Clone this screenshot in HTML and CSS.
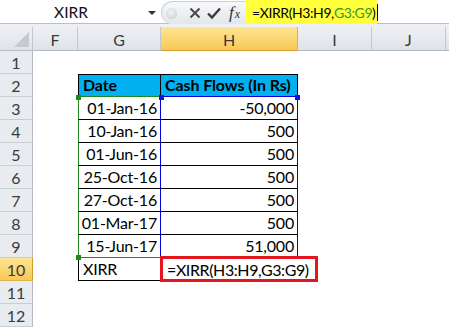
FILE: index.html
```html
<!DOCTYPE html>
<html>
<head>
<meta charset="utf-8">
<link rel="stylesheet" href="styles.css">
</head>
<body>
<div class="app">
  <div class="fbar">
    <div class="namebox"><span class="name">XIRR</span><span class="dd"></span></div>
    <div class="pill">
      <span class="dot"></span>
      <span class="btn">
        <svg width="12" height="12" viewBox="0 0 12 12"><path d="M1.5 1.5 L10.5 10.5 M10.5 1.5 L1.5 10.5" stroke="#4a4a4a" stroke-width="2" fill="none"/></svg>
      </span>
      <span class="btn">
        <svg width="14" height="12" viewBox="0 0 14 12"><path d="M1 6.5 L5 10.5 L13 1.5" stroke="#3a3a3a" stroke-width="2.4" fill="none"/></svg>
      </span>
      <span class="fx"><span class="f">f</span><span class="x">x</span></span>
    </div>
    <div class="formula"><span>=XIRR(H3:H9,</span><span class="grn">G3:G9</span><span>)</span><span class="caret"></span></div>
    <div class="frest"></div>
  </div>
  <div class="strip"></div>
  <div class="sheet">
    <div class="row hdr">
      <div class="corner"><span class="tri"></span></div>
      <div class="ch">F</div>
      <div class="ch">G</div>
      <div class="ch sel">H</div>
      <div class="ch">I</div>
      <div class="ch">J</div>
      <div class="ch last"></div>
    </div>
    <div class="row"><div class="rh">1</div><div class="c"></div><div class="c"></div><div class="c"></div><div class="c"></div><div class="c"></div><div class="c"></div></div>
    <div class="row"><div class="rh">2</div><div class="c"></div><div class="c t th g2">Date</div><div class="c t th h2">Cash Flows (In Rs)</div><div class="c"></div><div class="c"></div><div class="c"></div></div>
    <div class="row"><div class="rh">3</div><div class="c"></div><div class="c t gr r">01-Jan-16</div><div class="c t hb r">-50,000</div><div class="c"></div><div class="c"></div><div class="c"></div></div>
    <div class="row"><div class="rh">4</div><div class="c"></div><div class="c t gr r">10-Jan-16</div><div class="c t hb r">500</div><div class="c"></div><div class="c"></div><div class="c"></div></div>
    <div class="row"><div class="rh">5</div><div class="c"></div><div class="c t gr r">01-Jun-16</div><div class="c t hb r">500</div><div class="c"></div><div class="c"></div><div class="c"></div></div>
    <div class="row"><div class="rh">6</div><div class="c"></div><div class="c t gr r">25-Oct-16</div><div class="c t hb r">500</div><div class="c"></div><div class="c"></div><div class="c"></div></div>
    <div class="row"><div class="rh">7</div><div class="c"></div><div class="c t gr r">27-Oct-16</div><div class="c t hb r">500</div><div class="c"></div><div class="c"></div><div class="c"></div></div>
    <div class="row"><div class="rh">8</div><div class="c"></div><div class="c t gr r">01-Mar-17</div><div class="c t hb r">500</div><div class="c"></div><div class="c"></div><div class="c"></div></div>
    <div class="row"><div class="rh">9</div><div class="c"></div><div class="c t gr glast r">15-Jun-17</div><div class="c t hb hlast r">51,000</div><div class="c"></div><div class="c"></div><div class="c"></div></div>
    <div class="row"><div class="rh sel">10</div><div class="c"></div><div class="c t g10">XIRR</div><div class="c h10"><span class="ftext">=XIRR(H3:H9,G3:G9)</span><span class="redbox"></span></div><div class="c"></div><div class="c"></div><div class="c"></div></div>
    <div class="row"><div class="rh">11</div><div class="c"></div><div class="c"></div><div class="c"></div><div class="c"></div><div class="c"></div><div class="c"></div></div>
    <div class="row"><div class="rh">12</div><div class="c"></div><div class="c"></div><div class="c"></div><div class="c"></div><div class="c"></div><div class="c"></div></div>
    <span class="sq green sq1"></span>
    <span class="sq green sq2"></span>
    <span class="sq blue sq3"></span>
    <span class="sq blue sq4"></span>
  </div>
</div>
</body>
</html>
```

FILE: styles.css
```css
* { box-sizing: border-box; }
html, body { margin: 0; padding: 0; background: #fff; }
body { font-family: Lato, "Liberation Sans", sans-serif; color: #000; width: 449px; height: 328px; overflow: hidden; }

.fbar { display: flex; height: 24px; border-bottom: 1px solid #b9c0c8; background: #fff; }
.namebox { width: 161px; display: flex; align-items: center; }
.name { width: 142px; text-align: center; font-size: 15.5px; color: #111; }
.dd { width: 0; height: 0; margin-left: 6px; border-left: 4px solid transparent; border-right: 4px solid transparent; border-top: 4px solid #333; margin-top: 2px; }

.pill { width: 85px; margin-top: 1px; height: 23px; background: linear-gradient(#f7f8fa, #e3e6ea); border: 1px solid #c9ced5; border-right: 0; border-bottom: 0; border-radius: 12px 0 0 12px; display: flex; align-items: center; }
.dot { width: 11px; height: 11px; border-radius: 50%; background: radial-gradient(circle at 45% 40%, #f4f5f7, #c4c9d0); margin-left: 4px; margin-right: 12px; }
.btn { display: flex; align-items: center; margin-right: 6px; }
.fx { font-family: "Liberation Serif", serif; font-style: italic; color: #333; margin-left: 2px; display: flex; align-items: baseline; }
.fx .f { font-size: 17px; }
.fx .x { font-size: 12px; margin-left: 1px; }

.formula { width: 131px; flex: none; height: 24px; background: #ffff3a; display: flex; align-items: center; padding-left: 6px; font-size: 14px; letter-spacing: -0.4px; white-space: nowrap; }
.grn { color: #2f9a2f; }
.caret { width: 1px; height: 17px; background: #000; margin-left: 2px; flex: none; }
.frest { flex: 1; }

.strip { height: 3px; background: #eef0f3; }

.sheet { position: relative; }
.row { display: grid; grid-template-columns: 33px 45px 83px 137px 74px 74px 1fr; height: 23px; }
.row.hdr { height: 24px; }

.corner { background: linear-gradient(#eef0f3, #dfe3e8); border-right: 1px solid #c3c8cf; border-bottom: 1px solid #b3bac4; position: relative; }
.tri { position: absolute; right: 3px; bottom: 3px; width: 0; height: 0; border-left: 15px solid transparent; border-bottom: 15px solid #c5cad1; }
.ch { background: linear-gradient(#eef0f3, #dfe3e8); border-right: 1px solid #c3c8cf; border-bottom: 1px solid #b3bac4; display: flex; align-items: center; justify-content: center; font-size: 16px; color: #3a3a3a; padding-top: 1px; }
.ch.sel { background: linear-gradient(#fde592, #f7c957); border-right-color: #e2b04a; border-bottom-color: #d59a2e; }
.ch.last { border-right: 0; }

.rh { background: #e8ebef; border-right: 1px solid #b3bac4; border-bottom: 1px solid #c9ced5; display: flex; align-items: center; justify-content: center; font-size: 16px; color: #3a3a3a; }
.rh.sel { background: linear-gradient(#fde592, #f7c957); border-bottom-color: #e2b04a; border-right-color: #d59a2e; }

.c { background: #fff; font-size: 16px; letter-spacing: -0.2px; white-space: nowrap; display: flex; align-items: flex-end; padding: 0 3px 2px 4px; }
.c.r { justify-content: flex-end; }
.t { border-right: 1px solid #000; border-bottom: 1px solid #000; }
.th { background: #00b0f0; font-weight: bold; border-top: 1px solid #000; letter-spacing: -0.1px; }
.g2 { border-left: 1px solid #000; border-bottom-color: #1b8a1b; padding-left: 4px; }
.h2 { border-bottom-color: #0000e0; }
.gr { border-left: 1px solid #1b8a1b; border-right-color: #0000e0; }
.hb { border-right-color: #0000e0; }
.glast { border-bottom-color: #1b8a1b; }
.hlast { border-bottom-color: #0000e0; }
.g10 { border-left: 1px solid #000; }
.h10 { position: relative; overflow: visible; padding-left: 6px; letter-spacing: -0.4px; }
.ftext { position: relative; z-index: 1; }
.redbox { position: absolute; left: -1px; top: -2px; width: 158px; height: 26px; border: 3px solid #e3161d; z-index: 2; }

.sq { position: absolute; width: 5px; height: 5px; z-index: 3; }
.green { background: #1b8a1b; }
.blue { background: #1010f0; }
.sq1 { left: 76px; top: 68px; }
.sq2 { left: 76px; top: 228px; }
.sq3 { left: 159px; top: 68px; }
.sq4 { left: 295px; top: 68px; }
```
